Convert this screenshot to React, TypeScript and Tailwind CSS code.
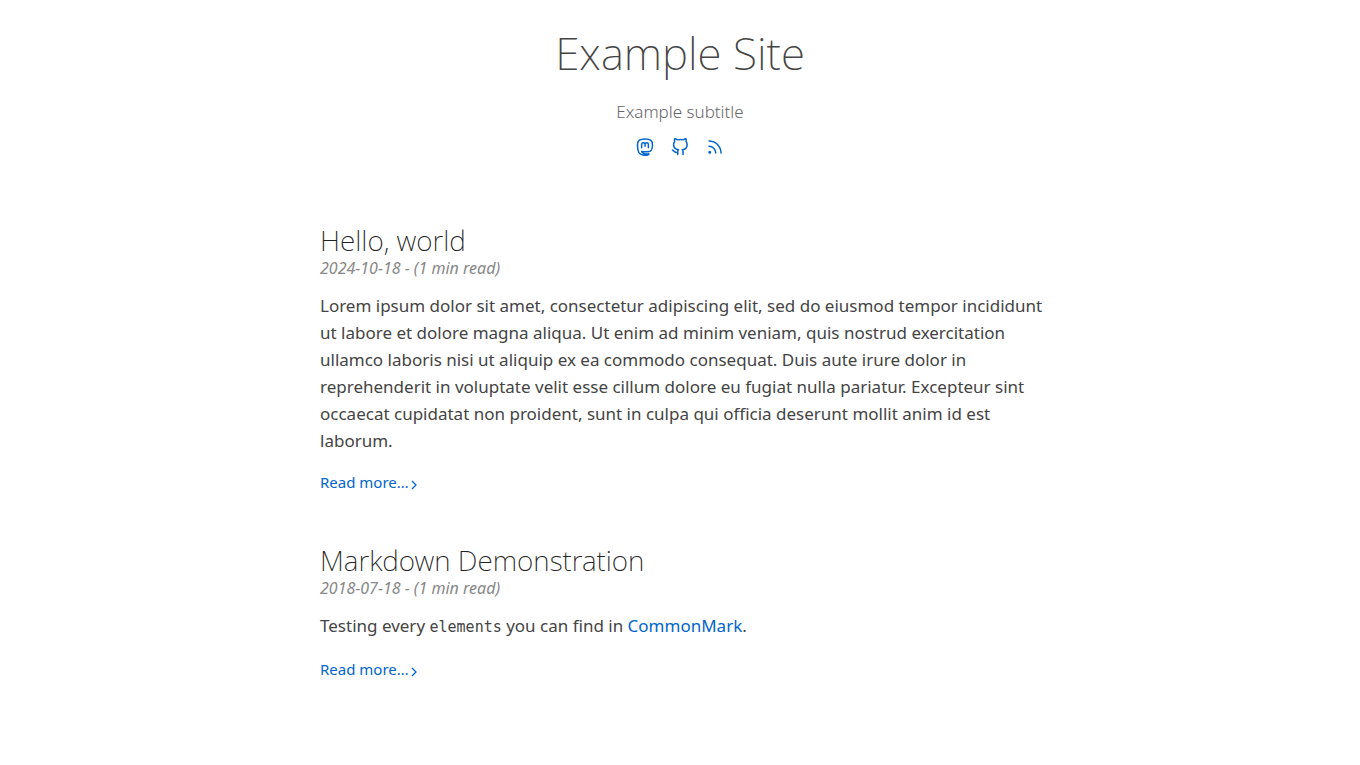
import React from "react";
import { FiGithub, FiRss } from "react-icons/fi";

function MastodonIcon({ className }: { className?: string }) {
  return (
    <svg
      viewBox="0 0 24 24"
      fill="none"
      stroke="currentColor"
      strokeWidth="2"
      strokeLinecap="round"
      strokeLinejoin="round"
      className={className}
    >
      <path d="M17 22.200c-3 1-8 1-11-.7C2.500 19.300 2 15 2 9.500 2 3.500 4.200 1.200 12 1.200S22 3.500 22 9.500c0 6-1.500 8.700-7 8.900-3 .2-5.500 0-7.500-.6 1 3.200 4.500 4 9.500 3.200z" />
      <path d="M7.500 13V8.700c0-3 4.500-3 4.500 0V11 8.700c0-3 4.500-3 4.500 0V13" />
    </svg>
  );
}

const socials = [
  { label: "Mastodon", Icon: MastodonIcon },
  { label: "GitHub", Icon: FiGithub },
  { label: "RSS", Icon: FiRss },
];

type PostProps = { title: string; date: string; children: React.ReactNode };

function Post({ title, date, children }: PostProps) {
  return (
    <article className="mb-[50px]">
      <h2 className="text-[28px] leading-8 font-extralight text-[#222]">
        <a href="#post">{title}</a>
      </h2>
      <p className="text-[16px] leading-6 text-[#888] italic">{date} - (1 min read)</p>
      <div className="mt-3 -mr-2 text-[17px] leading-[27px]">{children}</div>
      <a href="#post" className="mt-4 inline-flex items-center gap-0.5 text-[15px] leading-6 text-[#0165cc]">
        Read more…
        <svg
          viewBox="0 0 6 10"
          fill="none"
          stroke="currentColor"
          strokeWidth="1.3"
          aria-hidden
          className="mt-1.5 h-[10px] w-[6px]"
        >
          <path d="M1 1l4 4-4 4" />
        </svg>
      </a>
    </article>
  );
}

export default function App() {
  return (
    <div className="min-h-screen bg-white font-['Noto_Sans',sans-serif] text-[#444]">
      <div className="mx-auto max-w-[760px] px-5">
        <header className="flex flex-col items-center pt-6">
          <h1 className="text-[44px] leading-[58px] font-extralight">Example Site</h1>
          <p className="mt-[18px] text-[17px] leading-6 font-light text-[#666]">Example subtitle</p>
          <nav aria-label="Social links" className="mt-[14px] flex gap-[17px]">
            {socials.map(({ label, Icon }) => (
              <a key={label} href={"#" + label} aria-label={label} className="text-[#0165cc]">
                <Icon className="size-[18px]" />
              </a>
            ))}
          </nav>
        </header>
        <main className="mt-[68px]">
          <Post title="Hello, world" date="2024-10-18">
            <p>
              Lorem ipsum dolor sit amet, consectetur adipiscing elit, sed do eiusmod tempor incididunt ut labore et
              dolore magna aliqua. Ut enim ad minim veniam, quis nostrud exercitation ullamco laboris nisi ut aliquip ex
              ea commodo consequat. Duis aute irure dolor in reprehenderit in voluptate velit esse cillum dolore eu
              fugiat nulla pariatur. Excepteur sint occaecat cupidatat non proident, sunt in culpa qui officia deserunt
              mollit anim id est laborum.
            </p>
          </Post>
          <Post title="Markdown Demonstration" date="2018-07-18">
            <p>
              Testing every <code className="font-['DejaVu_Sans_Mono',monospace] text-[15px]">elements</code> you can
              find in{" "}
              <a href="#commonmark" className="text-[#0165cc]">
                CommonMark
              </a>
              .
            </p>
          </Post>
        </main>
      </div>
    </div>
  );
}
